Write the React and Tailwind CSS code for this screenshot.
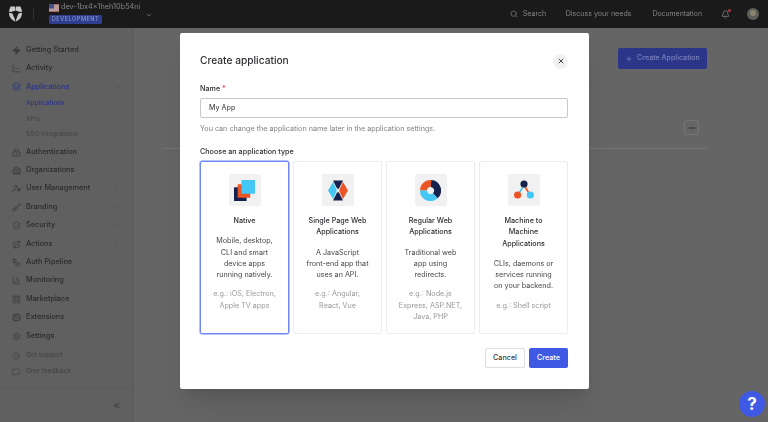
import {
  Zap, ChartLine, Layers, LockKeyhole, Building2, UserCog, Brush, ShieldCheck, Route, Workflow,
  ChartColumn, LayoutGrid, Cpu, Settings, CircleHelp, MessageSquare, ChevronsLeft, ChevronRight,
  ChevronDown, Search, Bell, X, Plus, Ellipsis,
} from 'lucide-react'

const navTop = [
  { label: 'Getting Started', icon: Zap, filled: true },
  { label: 'Activity', icon: ChartLine },
]

const navBottom = [
  { label: 'Authentication', icon: LockKeyhole, arrow: true },
  { label: 'Organizations', icon: Building2 },
  { label: 'User Management', icon: UserCog, arrow: true },
  { label: 'Branding', icon: Brush, arrow: true },
  { label: 'Security', icon: ShieldCheck, arrow: true },
  { label: 'Actions', icon: Route, arrow: true },
  { label: 'Auth Pipeline', icon: Workflow, arrow: true },
  { label: 'Monitoring', icon: ChartColumn, arrow: true },
  { label: 'Marketplace', icon: LayoutGrid },
  { label: 'Extensions', icon: Cpu },
  { label: 'Settings', icon: Settings },
]

function NavRow({ item }) {
  const Icon = item.icon
  return (
    <div className="h-[18.4px] flex items-center pl-[11.5px] pr-[12px] text-[7.3px] font-medium text-[#2b2b2b]">
      <Icon size={9} strokeWidth={2} fill={item.filled ? 'currentColor' : 'none'} className="text-[#3c3c3c] shrink-0" />
      <span className="ml-[5.5px] flex-1">{item.label}</span>
      {item.arrow && <ChevronRight size={7} className="text-[#4c4c4c]" />}
    </div>
  )
}

function NativeIcon() {
  return (
    <svg width="21" height="21" viewBox="0 0 20 20">
      <rect x="0" y="7" width="12" height="13" rx="0.5" fill="#16214d" />
      <rect x="3.5" y="4" width="12" height="13" rx="0.5" fill="#eb5424" />
      <rect x="7" y="0" width="13" height="13" rx="0.5" fill="#44c7f4" />
    </svg>
  )
}

function SpaIcon() {
  return (
    <svg width="20" height="21" viewBox="0 0 20 20">
      <path d="M5 0H15L10 10Z" fill="#16214d" />
      <path d="M5 20H15L10 10Z" fill="#16214d" />
      <path d="M5 1.5L0 10L5 18.5L9 10Z" fill="#44c7f4" />
      <path d="M15 1.5L20 10L15 18.5L11 10Z" fill="#eb5424" />
      <path d="M10 7.5L11.4 10L10 12.5L8.6 10Z" fill="#ffffff" />
    </svg>
  )
}

function WebIcon() {
  return (
    <svg width="21" height="21" viewBox="0 0 20 20" fill="none" strokeWidth="6.6">
      <path d="M3.3 10A6.7 6.7 0 0 1 10.5 3.3" stroke="#eb5424" />
      <path d="M10.5 3.3A6.7 6.7 0 0 1 14.5 15" stroke="#16214d" />
      <path d="M14.5 15A6.7 6.7 0 0 1 3.3 10" stroke="#44c7f4" />
    </svg>
  )
}

function M2mIcon() {
  return (
    <svg width="20" height="20" viewBox="0 0 20 20">
      <path d="M10 5L5.5 12.5" stroke="#44c7f4" strokeWidth="1.6" />
      <path d="M10 5L14.5 12.5" stroke="#eb5424" strokeWidth="1.6" />
      <circle cx="10" cy="4" r="3.6" fill="#16214d" />
      <circle cx="3.6" cy="15" r="3.6" fill="#eb5424" />
      <circle cx="16.4" cy="15" r="3.6" fill="#44c7f4" />
    </svg>
  )
}

const appTypes = [
  {
    icon: NativeIcon,
    title: ['Native'],
    desc: ['Mobile, desktop,', 'CLI and smart', 'device apps', 'running natively.'],
    eg: ['e.g.: iOS, Electron,', 'Apple TV apps'],
    selected: true,
  },
  {
    icon: SpaIcon,
    title: ['Single Page Web', 'Applications'],
    desc: ['A JavaScript', 'front-end app that', 'uses an API.'],
    eg: ['e.g.: Angular,', 'React, Vue'],
  },
  {
    icon: WebIcon,
    title: ['Regular Web', 'Applications'],
    desc: ['Traditional web', 'app using', 'redirects.'],
    eg: ['e.g.: Node.js', 'Express, ASP.NET,', 'Java, PHP'],
  },
  {
    icon: M2mIcon,
    title: ['Machine to', 'Machine', 'Applications'],
    desc: ['CLIs, daemons or', 'services running', 'on your backend.'],
    eg: ['e.g.: Shell script'],
  },
]

function Lines({ lines }) {
  return lines.map(line => <div key={line} className="blur-[0.25px]">{line}</div>)
}

function TypeCard({ type }) {
  const Icon = type.icon
  return (
    <div className={`h-[173px] flex flex-col items-center pt-[12px] text-center text-[7.2px] leading-[11.25px] rounded-[2px] ${type.selected ? 'border border-[#6f86f5] ring-[0.5px] ring-[#6f86f5]' : 'border border-[#ececec]'}`}>
      <div className="w-[32px] h-[32px] rounded-[2px] bg-[#f1f1f1] flex items-center justify-center">
        <Icon />
      </div>
      <div className="mt-[9px] font-medium text-[#2e2e33]"><Lines lines={type.title} /></div>
      <div className="mt-[9px] text-[#46464b]"><Lines lines={type.desc} /></div>
      <div className="mt-[8px] text-[#98989c]"><Lines lines={type.eg} /></div>
    </div>
  )
}

export default function App() {
  return (
    <div className="relative w-[768px] h-[422px] overflow-hidden font-['Inter',sans-serif]">
      <div className="h-full flex flex-col bg-[#656565] blur-[0.7px]">
        <header className="h-[28px] shrink-0 bg-[#1a1a1a] flex items-center text-[7.1px] text-[#858585]">
          <svg width="15" height="16" viewBox="0 0 15 16" className="ml-[8px]" fill="#c8c8c8">
            <path d="M2.5 0.5H7L7.5 4.5L3 6L0.8 5.5Z" />
            <path d="M12.5 0.5H8L7.5 4.5L12 6L14.2 5.5Z" />
            <path d="M1 6.8L4.5 7.6L6.5 12.5L7.5 15.5C4 14.5 1 11.5 1 6.8Z" />
            <path d="M14 6.8L10.5 7.6L8.5 12.5L7.5 15.5C11 14.5 14 11.5 14 6.8Z" />
          </svg>
          <div className="w-px h-[12px] bg-[#333333] ml-[10px]" />
          <div className="ml-[15px] flex flex-col gap-[3px]">
            <div className="flex items-center gap-[2px] h-[8px]">
              <svg width="10" height="8" viewBox="0 0 10 8">
                <rect width="10" height="8" fill="#a86a6a" />
                <rect y="1.5" width="10" height="1" fill="#cccccc" />
                <rect y="3.5" width="10" height="1" fill="#cccccc" />
                <rect y="5.5" width="10" height="1" fill="#cccccc" />
                <rect width="5" height="4.5" fill="#46508a" />
              </svg>
              <span className="text-[7.3px]">dev-1bx4×1heh10b54ni</span>
            </div>
            <div className="h-[9.5px] w-[53px] rounded-[1.5px] bg-[#2f3d8f] text-[#8a94c8] flex items-center justify-center text-[5.6px] font-medium tracking-[0.5px]">DEVELOPMENT</div>
          </div>
          <ChevronDown size={8} className="ml-[5px] mt-[1px]" />
          <div className="flex-1" />
          <Search size={8} className="mr-[5px]" />
          <span className="w-[23px]">Search</span>
          <span className="ml-[20px]">Discuss your needs</span>
          <span className="ml-[21px] text-[6.9px]">Documentation</span>
          <div className="relative ml-[19px]">
            <Bell size={9} />
            <div className="absolute -top-[1px] -right-[1px] w-[3px] h-[3px] rounded-full bg-[#b5343a]" />
          </div>
          <div className="w-[12px] h-[12px] rounded-full bg-[#5c6058] ml-[17px] mr-[9px] overflow-hidden">
            <div className="w-[6px] h-[6px] rounded-full bg-[#8d8170] mx-auto mt-[2px]" />
          </div>
        </header>

        <div className="flex-1 flex min-h-0">
          <aside className="w-[134px] shrink-0 border-r border-[#5a5a5a] bg-[#606060] flex flex-col pt-[13px]">
            {navTop.map(item => <NavRow key={item.label} item={item} />)}
            <div className="h-[18.4px] flex items-center pl-[11.5px] pr-[12px] text-[7.3px] font-medium text-[#2a3588]">
              <Layers size={9} className="shrink-0" />
              <span className="ml-[5.5px] flex-1">Applications</span>
              <ChevronDown size={7} className="text-[#4c4c4c]" />
            </div>
            <div className="pl-[26px] text-[6.5px] font-medium leading-[15.6px] text-[#464646]">
              <div className="text-[#2a3588]">Applications</div>
              <div>APIs</div>
              <div>SSO Integrations</div>
            </div>
            {navBottom.map(item => <NavRow key={item.label} item={item} />)}
            <div className="mt-[3px] pl-[12px] text-[6.5px] leading-[15.5px] text-[#444444] font-medium">
              <div className="flex items-center gap-[6px]"><CircleHelp size={8} />Get support</div>
              <div className="flex items-center gap-[6px]"><MessageSquare size={8} />Give feedback</div>
            </div>
            <div className="flex-1" />
            <div className="h-[35px] border-t border-[#5a5a5a] flex items-center justify-end pr-[12px] text-[#222222]">
              <ChevronsLeft size={9} />
            </div>
          </aside>

          <main className="flex-1 flex flex-col items-end pt-[20px] pr-[61px] pl-[30px]">
            <div className="h-[21px] w-[89px] rounded-[2px] bg-[#2b3688] text-[#7a82bb] text-[7.1px] font-medium flex items-center justify-center gap-[4px]">
              <Plus size={8} />Create Application
            </div>
            <div className="mt-[51px] mr-[8px] w-[15px] h-[15px] rounded-[2px] border border-[#757575] flex items-center justify-center text-[#222222]">
              <Ellipsis size={8} />
            </div>
            <div className="mt-[13px] w-full border-t border-[#747474]" />
          </main>
        </div>
      </div>

      <div className="absolute inset-0 flex items-start pl-[180px] pt-[33px]">
        <div className="w-[409px] h-[356px] bg-white rounded-[2px] shadow-xl pl-[20px] pr-[21px] pt-[18px] flex flex-col text-[#2e2e33]">
          <div className="h-[20px] flex items-center justify-between">
            <h2 className="text-[10.2px] font-medium blur-[0.25px]">Create application</h2>
            <button className="w-[15px] h-[15px] rounded-full bg-[#f1f1f1] flex items-center justify-center">
              <X size={8} strokeWidth={2.5} />
            </button>
          </div>
          <label className="mt-[12px] text-[7.2px] leading-[11px] font-medium blur-[0.25px]">Name <span className="text-[#e5484d]">*</span></label>
          <div className="mt-[4px] h-[20px] rounded-[2px] border border-[#c9c9c9] flex items-center px-[8px] text-[7.2px]"><span className="blur-[0.25px]">My App</span></div>
          <p className="mt-[5px] text-[7.2px] leading-[11px] text-[#818185] blur-[0.25px]">You can change the application name later in the application settings.</p>
          <div className="mt-[12px] text-[7.2px] leading-[11px] font-medium blur-[0.25px]">Choose an application type</div>
          <div className="mt-[4px] grid grid-cols-4 gap-[4px]">
            {appTypes.map(type => <TypeCard key={type.title[0]} type={type} />)}
          </div>
          <div className="mt-[14px] flex justify-end gap-[4px] text-[7.2px] font-medium">
            <button className="w-[40px] h-[20px] rounded-[2px] border border-[#dedede] text-[#3a3a40]">Cancel</button>
            <button className="w-[39px] h-[20px] rounded-[2px] bg-[#3f59e4] text-white">Create</button>
          </div>
        </div>
      </div>

      <button className="absolute left-[739px] top-[391px] w-[26px] h-[26px] rounded-full bg-[#3f59e4] text-white text-[17px] font-bold leading-none flex items-center justify-center">?</button>
    </div>
  )
}
